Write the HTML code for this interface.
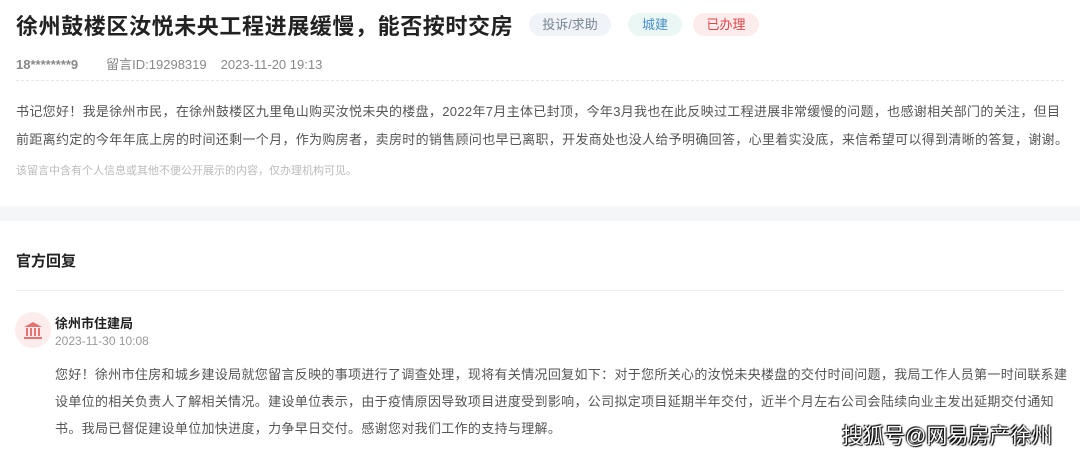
<!DOCTYPE html><html><head><meta charset="utf-8"><style>
body{margin:0;width:1080px;height:457px;overflow:hidden;background:#fff;font-family:"Liberation Sans","Noto Sans CJK SC",sans-serif;position:relative}
.a{position:absolute;white-space:nowrap}
.tag{position:absolute;top:13px;height:23px;line-height:23px;border-radius:12px;font-size:13px;text-align:center}
.p{font-size:13px;color:#555;line-height:28px;letter-spacing:0.32px}
</style></head><body>
<div class="a" style="left:16px;top:9px;font-size:22px;font-weight:bold;color:#222;letter-spacing:0.6px">徐州鼓楼区汝悦未央工程进展缓慢，能否按时交房</div>
<div class="tag" style="left:529px;width:82px;background:#f0f3f7;color:#7a8594">投诉/求助</div>
<div class="tag" style="left:628px;width:54px;background:#eaf7f5;color:#4a8fc8">城建</div>
<div class="tag" style="left:693px;width:66px;background:#fdecec;color:#e0454a">已办理</div>
<div class="a" style="left:16px;top:54px;font-size:13px;color:#888"><b>18********9</b><span style="margin-left:28px">留言ID:19298319</span><span style="margin-left:14px">2023-11-20 19:13</span></div>
<div class="a" style="left:16px;top:80px;width:1048px;border-top:1px dashed #e6e6e6"></div>
<div class="a p" style="left:16px;top:98px">书记您好！我是徐州市民，在徐州鼓楼区九里龟山购买汝悦未央的楼盘，2022年7月主体已封顶，今年3月我也在此反映过工程进展非常缓慢的问题，也感谢相关部门的关注，但目<br>前距离约定的今年年底上房的时间还剩一个月，作为购房者，卖房时的销售顾问也早已离职，开发商处也没人给予明确回答，心里着实没底，来信希望可以得到清晰的答复，谢谢。</div>
<div class="a" style="left:16px;top:162px;font-size:11px;color:#bbb">该留言中含有个人信息或其他不便公开展示的内容，仅办理机构可见。</div>
<div class="a" style="left:0;top:206px;width:1080px;height:15px;background:#f5f6f8"></div>
<div class="a" style="left:16px;top:250px;font-size:15px;font-weight:bold;color:#222">官方回复</div>
<div class="a" style="left:16px;top:290px;width:1048px;border-top:1px solid #eee"></div>
<div class="a" style="left:15px;top:312px;width:36px;height:36px;border-radius:50%;background:#fdecec">
<svg width="36" height="36" viewBox="0 0 36 36"><g fill="#e57373"><polygon points="18,10 9,15 27,15"/><rect x="11" y="16" width="2" height="8"/><rect x="15" y="16" width="2" height="8"/><rect x="19" y="16" width="2" height="8"/><rect x="23" y="16" width="2" height="8"/><rect x="9" y="25" width="18" height="2"/></g></svg></div>
<div class="a" style="left:55px;top:313px;font-size:13px;font-weight:bold;color:#222">徐州市住建局</div>
<div class="a" style="left:55px;top:334px;font-size:12px;color:#999">2023-11-30 10:08</div>
<div class="a p" style="left:55px;top:361px;line-height:27px">您好！徐州市住房和城乡建设局就您留言反映的事项进行了调查处理，现将有关情况回复如下：对于您所关心的汝悦未央楼盘的交付时间问题，我局工作人员第一时间联系建<br>设单位的相关负责人了解相关情况。建设单位表示，由于疫情原因导致项目进度受到影响，公司拟定项目延期半年交付，近半个月左右公司会陆续向业主发出延期交付通知<br>书。我局已督促建设单位加快进度，力争早日交付。感谢您对我们工作的支持与理解。</div>
<div class="a" style="left:842px;top:420px;font-size:21px;color:#fff;text-shadow:0 0 2px #000,1px 1px 1px #000,-1px -1px 1px #000">搜狐号@网易房产徐州</div>
</body></html>
